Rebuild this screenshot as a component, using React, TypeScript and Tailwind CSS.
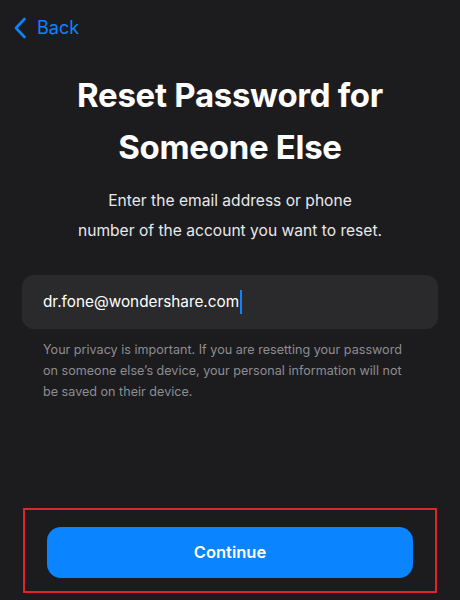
import React from "react";

export default function App() {
  return (
    <div
      className="w-[460px] h-[600px] bg-[#1c1c1e] flex flex-col overflow-hidden"
      style={{ fontFamily: "Inter, 'Noto Sans', sans-serif" }}
    >
      <div className="flex items-center h-[56px] pl-[13px]">
        <svg width="14" height="22" viewBox="0 0 14 22" className="mr-[10px]">
          <path d="M11.5 2 L3 11 L11.5 20" fill="none" stroke="#0a84ff" strokeWidth="2.6" strokeLinecap="round" strokeLinejoin="round" />
        </svg>
        <span className="text-[18px] text-[#0a84ff] leading-none">Back</span>
      </div>
      <div className="flex flex-col items-center mt-[13px]">
        <h1 className="text-[33px] font-bold text-white text-center leading-[52px] tracking-[-0.3px]">
          Reset Password for
          <br />
          Someone Else
        </h1>
        <p className="mt-[13px] text-[15.6px] text-[#e8e8ea] text-center leading-[30px]">
          Enter the email address or phone
          <br />
          number of the account you want to reset.
        </p>
      </div>
      <div className="mx-[22px] mt-[29px] h-[54px] rounded-[12px] bg-[#2a2a2c] flex items-center px-[21px]">
        <span className="text-[15.3px] text-white">dr.fone@wondershare.com</span>
        <span className="w-[2px] h-[24px] bg-[#0a84ff] ml-[1px]" />
      </div>
      <p className="mx-[43px] mt-[10px] text-[12.6px] leading-[21px] text-[#8d8d92]">
        Your privacy is important. If you are resetting your password on someone else’s device, your personal information will not be saved on their device.
      </p>
      <div className="flex-1" />
      <div className="mx-[23px] mb-[7px] h-[85px] border-2 border-[#e3232b] flex items-center justify-center pt-[3px]">
        <button className="w-[366px] h-[51px] rounded-[14px] bg-[#0a84ff] text-white text-[16.5px] font-semibold">
          Continue
        </button>
      </div>
    </div>
  );
}
